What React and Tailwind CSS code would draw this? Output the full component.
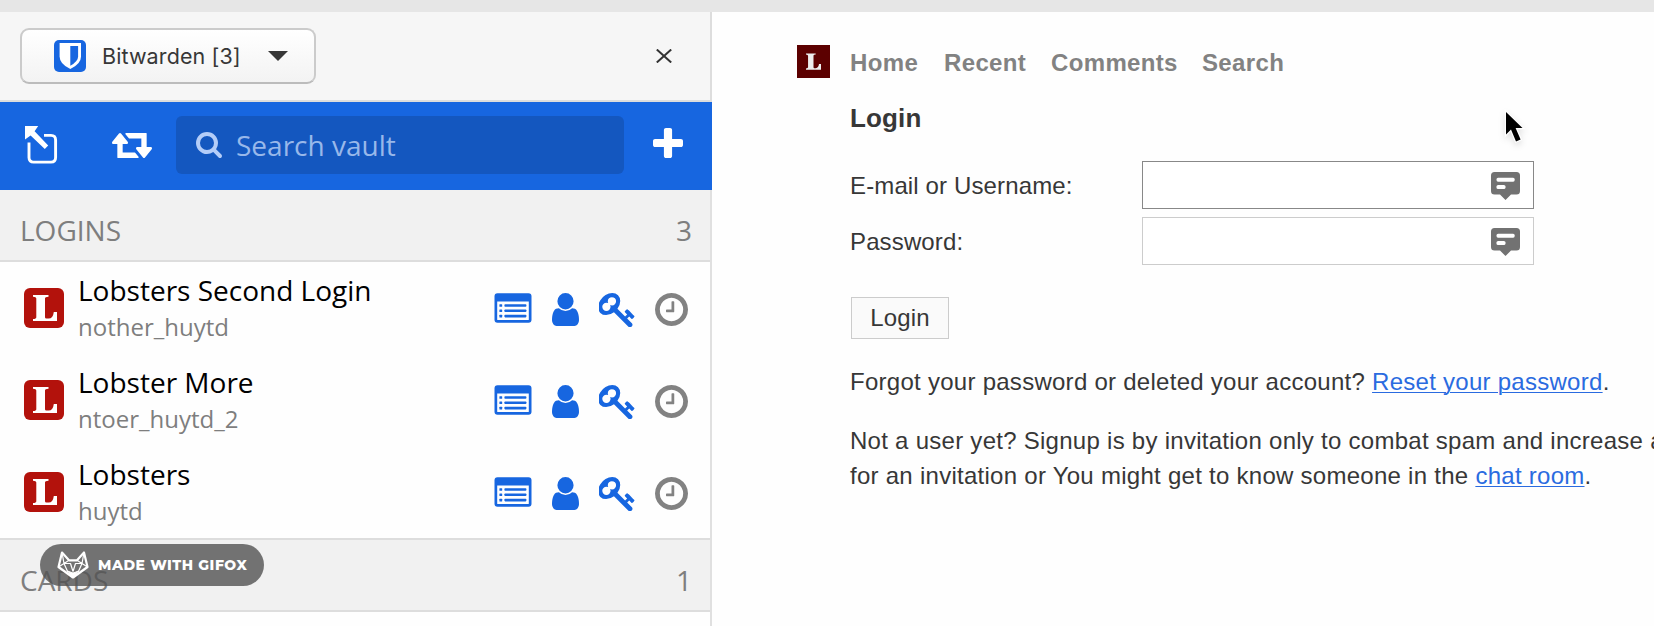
import React from "react";

const SearchIcon = () => (
  <svg className="h-[26px] w-[26px] shrink-0" viewBox="64 128 1664 1664" fill="currentColor">
    <path d="M1216 832q0-185-131.5-316.5t-316.5-131.5-316.5 131.5-131.5 316.5 131.5 316.5 316.5 131.5 316.5-131.5 131.5-316.5zm512 832q0 52-38 90t-90 38q-54 0-90-38l-343-342q-179 124-399 124-143 0-273.5-55.5t-225-150-150-225-55.5-273.5 55.5-273.5 150-225 225-150 273.5-55.5 273.5 55.5 225 150 150 225 55.5 273.5q0 220-124 399l343 343q37 37 37 90z" />
  </svg>
);

const SyncIcon = () => (
  <svg className="h-[25px] w-[40px] shrink-0" viewBox="0 384 1920 1152" preserveAspectRatio="none" fill="currentColor">
    <path d="M1280 1504q0 13-9.5 22.5t-22.5 9.5h-960q-8 0-13.5-2t-9-7-5.5-8-3-11.5-1-11.5v-600h-192q-26 0-45-19t-19-45q0-24 15-41l320-384q19-22 49-22t49 22l320 384q15 17 15 41 0 26-19 45t-45 19h-192v384h576q16 0 25 11l160 192q7 10 7 21zm640-416q0 24-15 41l-320 384q-20 23-49 23t-49-23l-320-384q-15-17-15-41 0-26 19-45t45-19h192v-384h-576q-16 0-25-12l-160-192q-7-9-7-20 0-13 9.5-22.5t22.5-9.5h960q8 0 13.5 2t9 7 5.5 8 3 11.5 1 11.5v600h192q26 0 45 19t19 45z" />
  </svg>
);

const PlusIcon = () => (
  <svg className="h-[30px] w-[30px] shrink-0" viewBox="192 128 1408 1408" fill="currentColor">
    <path d="M1600 736v192q0 40-28 68t-68 28h-416v416q0 40-28 68t-68 28h-192q-40 0-68-28t-28-68v-416h-416q-40 0-68-28t-28-68v-192q0-40 28-68t68-28h416v-416q0-40 28-68t68-28h192q40 0 68 28t28 68v416h416q40 0 68 28t28 68z" />
  </svg>
);

const PopOutIcon = () => (
  <svg className="h-[38px] w-[33px] shrink-0" viewBox="0 0 33 38">
    <path d="M19 9.400H26q4.600 0 4.600 4.600v17.500q0 4.600-4.600 4.600H8.600q-4.600 0-4.600-4.600V16.500" fill="none" stroke="#fff" strokeWidth="2.900" />
    <path d="M0 0h13.200L9.600 5.200 23.200 19.400 19.800 23 5.600 9.400 0 13.400z" fill="#fff" />
  </svg>
);

const ListIcon = () => (
  <svg className="h-[30px] w-[38px]" viewBox="0 0 38 30">
    <path fillRule="evenodd" d="M3.500 .3h31q3 0 3 3v23.400q0 3-3 3h-31q-3 0-3-3v-23.400q0-3 3-3zM3.200 8.500v18q0 .6.6.6h30.400q.6 0 .6-.6V8.500z" fill="currentColor" />
    <g fill="currentColor">
      <rect x="5.400" y="11.200" width="2.800" height="2.600" rx=".5" />
      <rect x="5.400" y="16.500" width="2.800" height="2.600" rx=".5" />
      <rect x="5.400" y="21.800" width="2.800" height="2.600" rx=".5" />
      <rect x="10.400" y="11.200" width="22" height="2.600" rx=".8" />
      <rect x="10.400" y="16.500" width="22" height="2.600" rx=".8" />
      <rect x="10.400" y="21.800" width="22" height="2.600" rx=".8" />
    </g>
  </svg>
);

const UserIcon = () => (
  <svg className="h-[33px] w-[27px]" viewBox="256 128 1280 1536" preserveAspectRatio="none" fill="currentColor">
    <path d="M1536 1399q0 109-62.5 187t-150.5 78h-854q-88 0-150.5-78t-62.5-187q0-85 8.5-160.5t31.5-152 58.5-131 94-89 134.5-34.5q131 128 313 128t313-128q76 0 134.5 34.5t94 89 58.5 131 31.5 152 8.5 160.5zm-256-887q0 159-112.5 271.5t-271.5 112.5-271.5-112.5-112.5-271.5 112.5-271.5 271.5-112.5 271.5 112.5 112.5 271.5z" />
  </svg>
);

const KeyIcon = () => (
  <svg className="h-[34px] w-[36px]" viewBox="62 128 1624 1574" fill="currentColor">
    <path d="M832 512q0-80-56-136t-136-56-136 56-56 136q0 42 19 83-41-19-83-19-80 0-136 56t-56 136 56 136 136 56 136-56 56-136q0-42-19-83 41 19 83 19 80 0 136-56t56-136zm851 704q0 17-49 66t-66 49q-9 0-28.5-16t-36.5-33-38.5-40-24.5-26l-96 96 220 220q28 28 28 68 0 42-39 81t-81 39q-40 0-68-28l-671-671q-176 131-365 131-163 0-265.5-102.5t-102.5-265.5q0-160 95-313t248-248 313-95q163 0 265.5 102.5t102.5 265.5q0 189-131 365l355 355 96-96q-3-3-26-24.5t-40-38.5-33-36.5-16-28.5q0-17 49-66t66-49q13 0 23 10 6 6 46 44.5t82 79.5 86.5 86 73 78 28.5 41z" />
  </svg>
);

const ClockIcon = () => (
  <svg className="h-[33px] w-[33px] text-[#828282]" viewBox="128 128 1536 1536" fill="currentColor">
    <path d="M1024 544v448q0 14-9 23t-23 9h-320q-14 0-23-9t-9-23v-64q0-14 9-23t23-9h224v-352q0-14 9-23t23-9h64q14 0 23 9t9 23zm416 352q0-148-73-273t-198-198-273-73-273 73-198 198-73 273 73 273 198 198 273 73 273-73 198-198 73-273zm224 0q0 209-103 385.5t-279.5 279.5-385.500 103-385.500-103-279.500-279.500-103-385.500 103-385.500 279.500-279.500 385.500-103 385.500 103 279.500 279.500 103 385.500z" />
  </svg>
);

const LobsterL = ({ className }) => (
  <svg className={className} viewBox="0 0 24 26" fill="currentColor">
    <path d="M0 0h15.500v1.800q-3.500.3-3.500 1.700v18.700q0 1.400 1.400 1.400h2.200q4.400 0 5.200-6.600H24V26H0v-1.900q3.300-.3 3.300-1.900V3.600Q3.300 2.100 0 1.800z" />
  </svg>
);

const FoxIcon = () => (
  <svg className="h-[28px] w-[32px] shrink-0" viewBox="0 0 32 28" fill="none" stroke="#fff" strokeLinejoin="round">
    <path d="M5 1.500 12 9.300h8L27 1.500l3.500 14.500L16 26.500 1.500 16z" strokeWidth="2.200" />
    <path d="M12 9.300 7 12.500 1.500 16M20 9.300l5 3.200 5.500 3.500M7 12.500h6.500l2.500 8M25 12.500h-6.500l-2.500 8M7 12.500l4 9M25 12.500l-4 9M5 1.500l2 11M27 1.500l-2 11" strokeWidth="1.200" />
    <path d="M10.500 20l5.500 6.500 5.500-6.500-5.500 2z" fill="#fff" strokeWidth="1" />
  </svg>
);

const PromptIcon = () => (
  <svg className="h-[28px] w-[29px]" viewBox="0 0 29 28">
    <path d="M3.500 0h22q3.500 0 3.500 3.500v15.500q0 3.500-3.500 3.500h-5.500L14.500 28 9 22.500H3.500Q0 22.500 0 19V3.500Q0 0 3.500 0z" fill="#727272" />
    <rect x="5.500" y="5.700" width="18.200" height="4" rx="1.600" fill="#fff" />
    <rect x="5.500" y="13" width="9" height="4" rx="1.600" fill="#fff" />
  </svg>
);

const logins = [
  { name: "Lobsters Second Login", user: "nother_huytd" },
  { name: "Lobster More", user: "ntoer_huytd_2" },
  { name: "Lobsters", user: "huytd" },
];

function SectionHeader({ title, count }) {
  return (
    <div className="flex h-[72px] justify-between border-b-2 border-[#dddddd] bg-[#f1f1f1] pt-5 pr-[18px] pl-5 text-[28px] leading-10 text-[#7e7e7e]">
      <span>{title}</span>
      <span>{count}</span>
    </div>
  );
}

function LoginRow({ name, user }) {
  return (
    <div className="flex h-[92px] pl-6">
      <div className="mt-[26px] flex h-10 w-10 items-center justify-center rounded-[6px] bg-[#b3120c] text-white">
        <LobsterL className="ml-[2px] h-[26px] w-6" />
      </div>
      <div className="mt-2 ml-[14px] flex-1">
        <div className="text-[28px] leading-10 text-black">{name}</div>
        <div className="text-2xl leading-[34px] text-[#7e7e7e]">{user}</div>
      </div>
      <div className="mt-[31px] mr-[22px] flex items-start text-[#1766e0]">
        <ListIcon />
        <div className="ml-5"><UserIcon /></div>
        <div className="ml-5"><KeyIcon /></div>
        <div className="ml-5"><ClockIcon /></div>
      </div>
    </div>
  );
}

function Sidebar() {
  return (
    <aside className="flex w-[712px] shrink-0 flex-col bg-[#fefefe] font-['Open_Sans',sans-serif]">
      <div className="flex h-[90px] items-start justify-between border-r-2 border-b-2 border-[#dddddd] bg-[#f6f6f6] pt-4 pr-[38px] pl-5">
        <button className="flex h-14 w-[296px] items-center rounded-[9px] border-2 border-[#cbcbcb] border-b-[#bcbcbc] bg-linear-to-b from-white to-[#f3f3f3] pl-8">
          <svg className="h-8 w-8" viewBox="0 0 32 32">
            <rect width="32" height="32" rx="5" fill="#1766e0" />
            <path d="M5.600 3h21.400v13.500q0 7.500-10.700 12.500Q5.600 24 5.600 16.500z" fill="#fff" />
            <path d="M16.300 6h7.800v10.500q0 5-7.800 9.200z" fill="#1766e0" />
          </svg>
          <span className="ml-4 font-['Inter',sans-serif] text-[21.500px] leading-7 tracking-[0.100px] text-[#373737]">Bitwarden [3]</span>
          <svg className="ml-auto mr-[26px] h-[10px] w-5" viewBox="0 0 20 10"><path d="M0 0h20L10 10z" fill="#373737" /></svg>
        </button>
        <svg className="mt-[21px] h-[14px] w-4" viewBox="0 0 16 14"><path d="M.8.500l14.400 13M15.200.500.8 13.500" stroke="#333" strokeWidth="2" /></svg>
      </div>
      <div className="flex h-[88px] items-start bg-[#1766e0] pt-[14px] pl-[25px] text-white">
        <div className="mt-[10px]"><PopOutIcon /></div>
        <div className="mt-[17px] ml-[54px]"><SyncIcon /></div>
        <div className="ml-6 flex h-[58px] w-[448px] items-center rounded-[6px] bg-[#1457bf] pl-5 text-[#b4cdf8]">
          <SearchIcon />
          <span className="ml-[14px] text-[28px] leading-10 text-[#98b8ea]">Search vault</span>
        </div>
        <div className="mt-3 ml-[29px]"><PlusIcon /></div>
      </div>
      <div className="flex flex-1 flex-col border-r-2 border-[#e0e0e0]">
        <SectionHeader title="LOGINS" count="3" />
        {logins.map((l) => <LoginRow key={l.name} {...l} />)}
        <div className="border-t-2 border-[#dddddd]">
          <SectionHeader title="CARDS" count="1" />
        </div>
      </div>
    </aside>
  );
}

function Field({ label, strong }) {
  return (
    <div className="flex h-12 items-center">
      <label className="w-[292px] leading-[35px] tracking-[0.130px]">{label}</label>
      <div className={strong ? "flex h-12 w-[392px] items-start justify-end border border-[#888888] bg-white pt-[10px] pr-[13px]" : "flex h-12 w-[392px] items-start justify-end border border-[#cccccc] bg-white pt-[10px] pr-[13px]"}>
        <PromptIcon />
      </div>
    </div>
  );
}

function LoginPage() {
  return (
    <main className="min-w-0 flex-1 overflow-hidden bg-[#fefefe] pt-[33px] pl-[85px] font-['Liberation_Sans',Arial,sans-serif] text-2xl text-[#373737]">
      <nav className="flex h-[35px] font-bold leading-[35px] tracking-[0.350px] text-[#828282]">
        <div className="flex h-[33px] w-[33px] items-center justify-center bg-[#5c0000] text-[#eeeeee]">
          <LobsterL className="h-[19px] w-[15px]" />
        </div>
        <a className="ml-5 w-[94px]">Home</a>
        <a className="w-[107px]">Recent</a>
        <a className="w-[151px]">Comments</a>
        <a>Search</a>
      </nav>
      <div className="pt-[21px] pl-[53px]">
        <h1 className="text-[26px] font-bold leading-[34px] tracking-[0.150px]">Login</h1>
        <div className="mt-[26px] flex flex-col gap-2">
          <Field label="E-mail or Username:" strong />
          <Field label="Password:" />
        </div>
        <button className="mt-8 ml-[1px] block h-[42px] w-[98px] border border-[#cccccc] bg-[#fafafa] leading-[38px] tracking-[0.200px]">Login</button>
        <p className="mt-[25px] leading-[35px] tracking-[0.270px] whitespace-nowrap">
          Forgot your password or deleted your account? <a className="text-[#2a6be0] underline decoration-1 underline-offset-[2px]">Reset your password</a>.
        </p>
        <p className="mt-6 leading-[35px] tracking-[0.270px] whitespace-nowrap">
          Not a user yet? Signup is by invitation only to combat spam and increase a<br />
          for an invitation or You might get to know someone in the <a className="text-[#2a6be0] underline decoration-1 underline-offset-[2px]">chat room</a>.
        </p>
      </div>
    </main>
  );
}

export default function App() {
  return (
    <div className="relative flex h-[626px] w-[1654px] flex-col overflow-hidden bg-[#fefefe]">
      <div className="h-3 shrink-0 bg-[#e6e6e6]" />
      <div className="flex min-h-0 flex-1">
        <Sidebar />
        <LoginPage />
      </div>
      <div className="absolute top-[544px] left-[40px] flex h-[42px] w-[224px] items-center rounded-full bg-[#525252]/80 pl-[17px] text-white">
        <FoxIcon />
        <span className="ml-[9px] font-['Montserrat','Inter',sans-serif] text-[14px] font-extrabold tracking-[0.550px] whitespace-nowrap">MADE WITH GIFOX</span>
      </div>
      <svg className="absolute top-[108px] left-[1502px] h-[38px] w-[28px] drop-shadow-md" viewBox="0 0 28 38">
        <path d="M4 4v22.500l5-5 5 12 4.600-2-5-11.500H20.500z" fill="#000" stroke="#fff" strokeWidth="2.400" paintOrder="stroke" />
      </svg>
    </div>
  );
}
